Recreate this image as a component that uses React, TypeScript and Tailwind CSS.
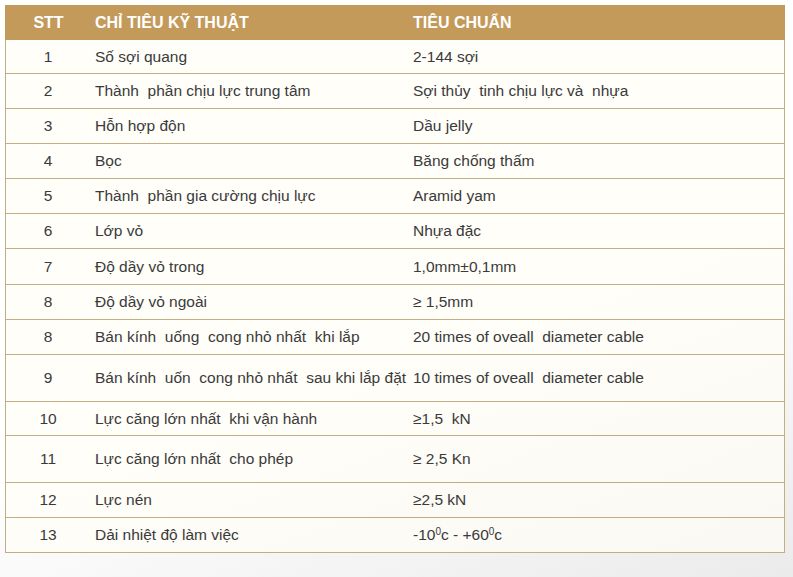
import React from "react";

const rows: { n: string; a: React.ReactNode; b: React.ReactNode; h: string }[] = [
  { n: "1", a: "Số sợi quang", b: "2-144 sợi", h: "h-[33px]" },
  { n: "2", a: "Thành  phần chịu lực trung tâm", b: "Sợi thủy  tinh chịu lực và  nhựa", h: "h-[35px]" },
  { n: "3", a: "Hỗn hợp độn", b: "Dầu jelly", h: "h-[35px]" },
  { n: "4", a: "Bọc", b: "Băng chống thấm", h: "h-[35px]" },
  { n: "5", a: "Thành  phần gia cường chịu lực", b: "Aramid yam", h: "h-[35px]" },
  { n: "6", a: "Lớp vỏ", b: "Nhựa đặc", h: "h-[35px]" },
  { n: "7", a: "Độ dầy vỏ trong", b: "1,0mm±0,1mm", h: "h-[36px]" },
  { n: "8", a: "Độ dầy vỏ ngoài", b: "≥ 1,5mm", h: "h-[35px]" },
  { n: "8", a: "Bán kính  uống  cong nhỏ nhất  khi lắp", b: "20 times of oveall  diameter cable", h: "h-[35px]" },
  { n: "9", a: "Bán kính  uốn  cong nhỏ nhất  sau khi lắp đặt", b: "10 times of oveall  diameter cable", h: "h-[47px]" },
  { n: "10", a: "Lực căng lớn nhất  khi vận hành", b: "≥1,5  kN", h: "h-[34px]" },
  { n: "11", a: "Lực căng lớn nhất  cho phép", b: "≥ 2,5 Kn", h: "h-[47px]" },
  { n: "12", a: "Lực nén", b: "≥2,5 kN", h: "h-[35px]" },
  {
    n: "13",
    a: "Dải nhiệt độ làm việc",
    b: (
      <span>
        -10<span className="text-[10px] relative -top-[5px]">0</span>c - +60<span className="text-[10px] relative -top-[5px]">0</span>c
      </span>
    ),
    h: "h-[35px]",
  },
];

export default function App() {
  return (
    <div
      className="w-full h-[577px] overflow-hidden pl-[5px] pt-[5px] bg-[linear-gradient(160deg,#ffffff_0%,#ffffff_55%,#ebebeb_100%)] text-[#3a3a3a]"
      style={{ fontFamily: '"Liberation Sans", Arial, sans-serif' }}
    >
      <div className="w-[780px] border-x border-b border-[#c4ad83]">
        <div className="grid grid-cols-[85px_318px_1fr] h-[35px] items-center bg-[#c49a5a] text-white font-bold text-[16px] -mx-px">
          <div className="text-center pl-[2px]">STT</div>
          <div className="pl-[5px]">CHỈ TIÊU KỸ THUẬT</div>
          <div className="pl-[5px]">TIÊU CHUẨN</div>
        </div>
        {rows.map((r, i) => (
          <div
            key={i}
            className={`grid grid-cols-[84px_318px_1fr] items-center text-[15.5px] bg-[#fffdf6]/70 ${r.h} ${
              i === 0 ? "" : "border-t border-[#c4ad83]"
            }`}
          >
            <div className="text-center">{r.n}</div>
            <div className="pl-[5px] whitespace-pre">{r.a}</div>
            <div className="pl-[5px] whitespace-pre">{r.b}</div>
          </div>
        ))}
      </div>
    </div>
  );
}
